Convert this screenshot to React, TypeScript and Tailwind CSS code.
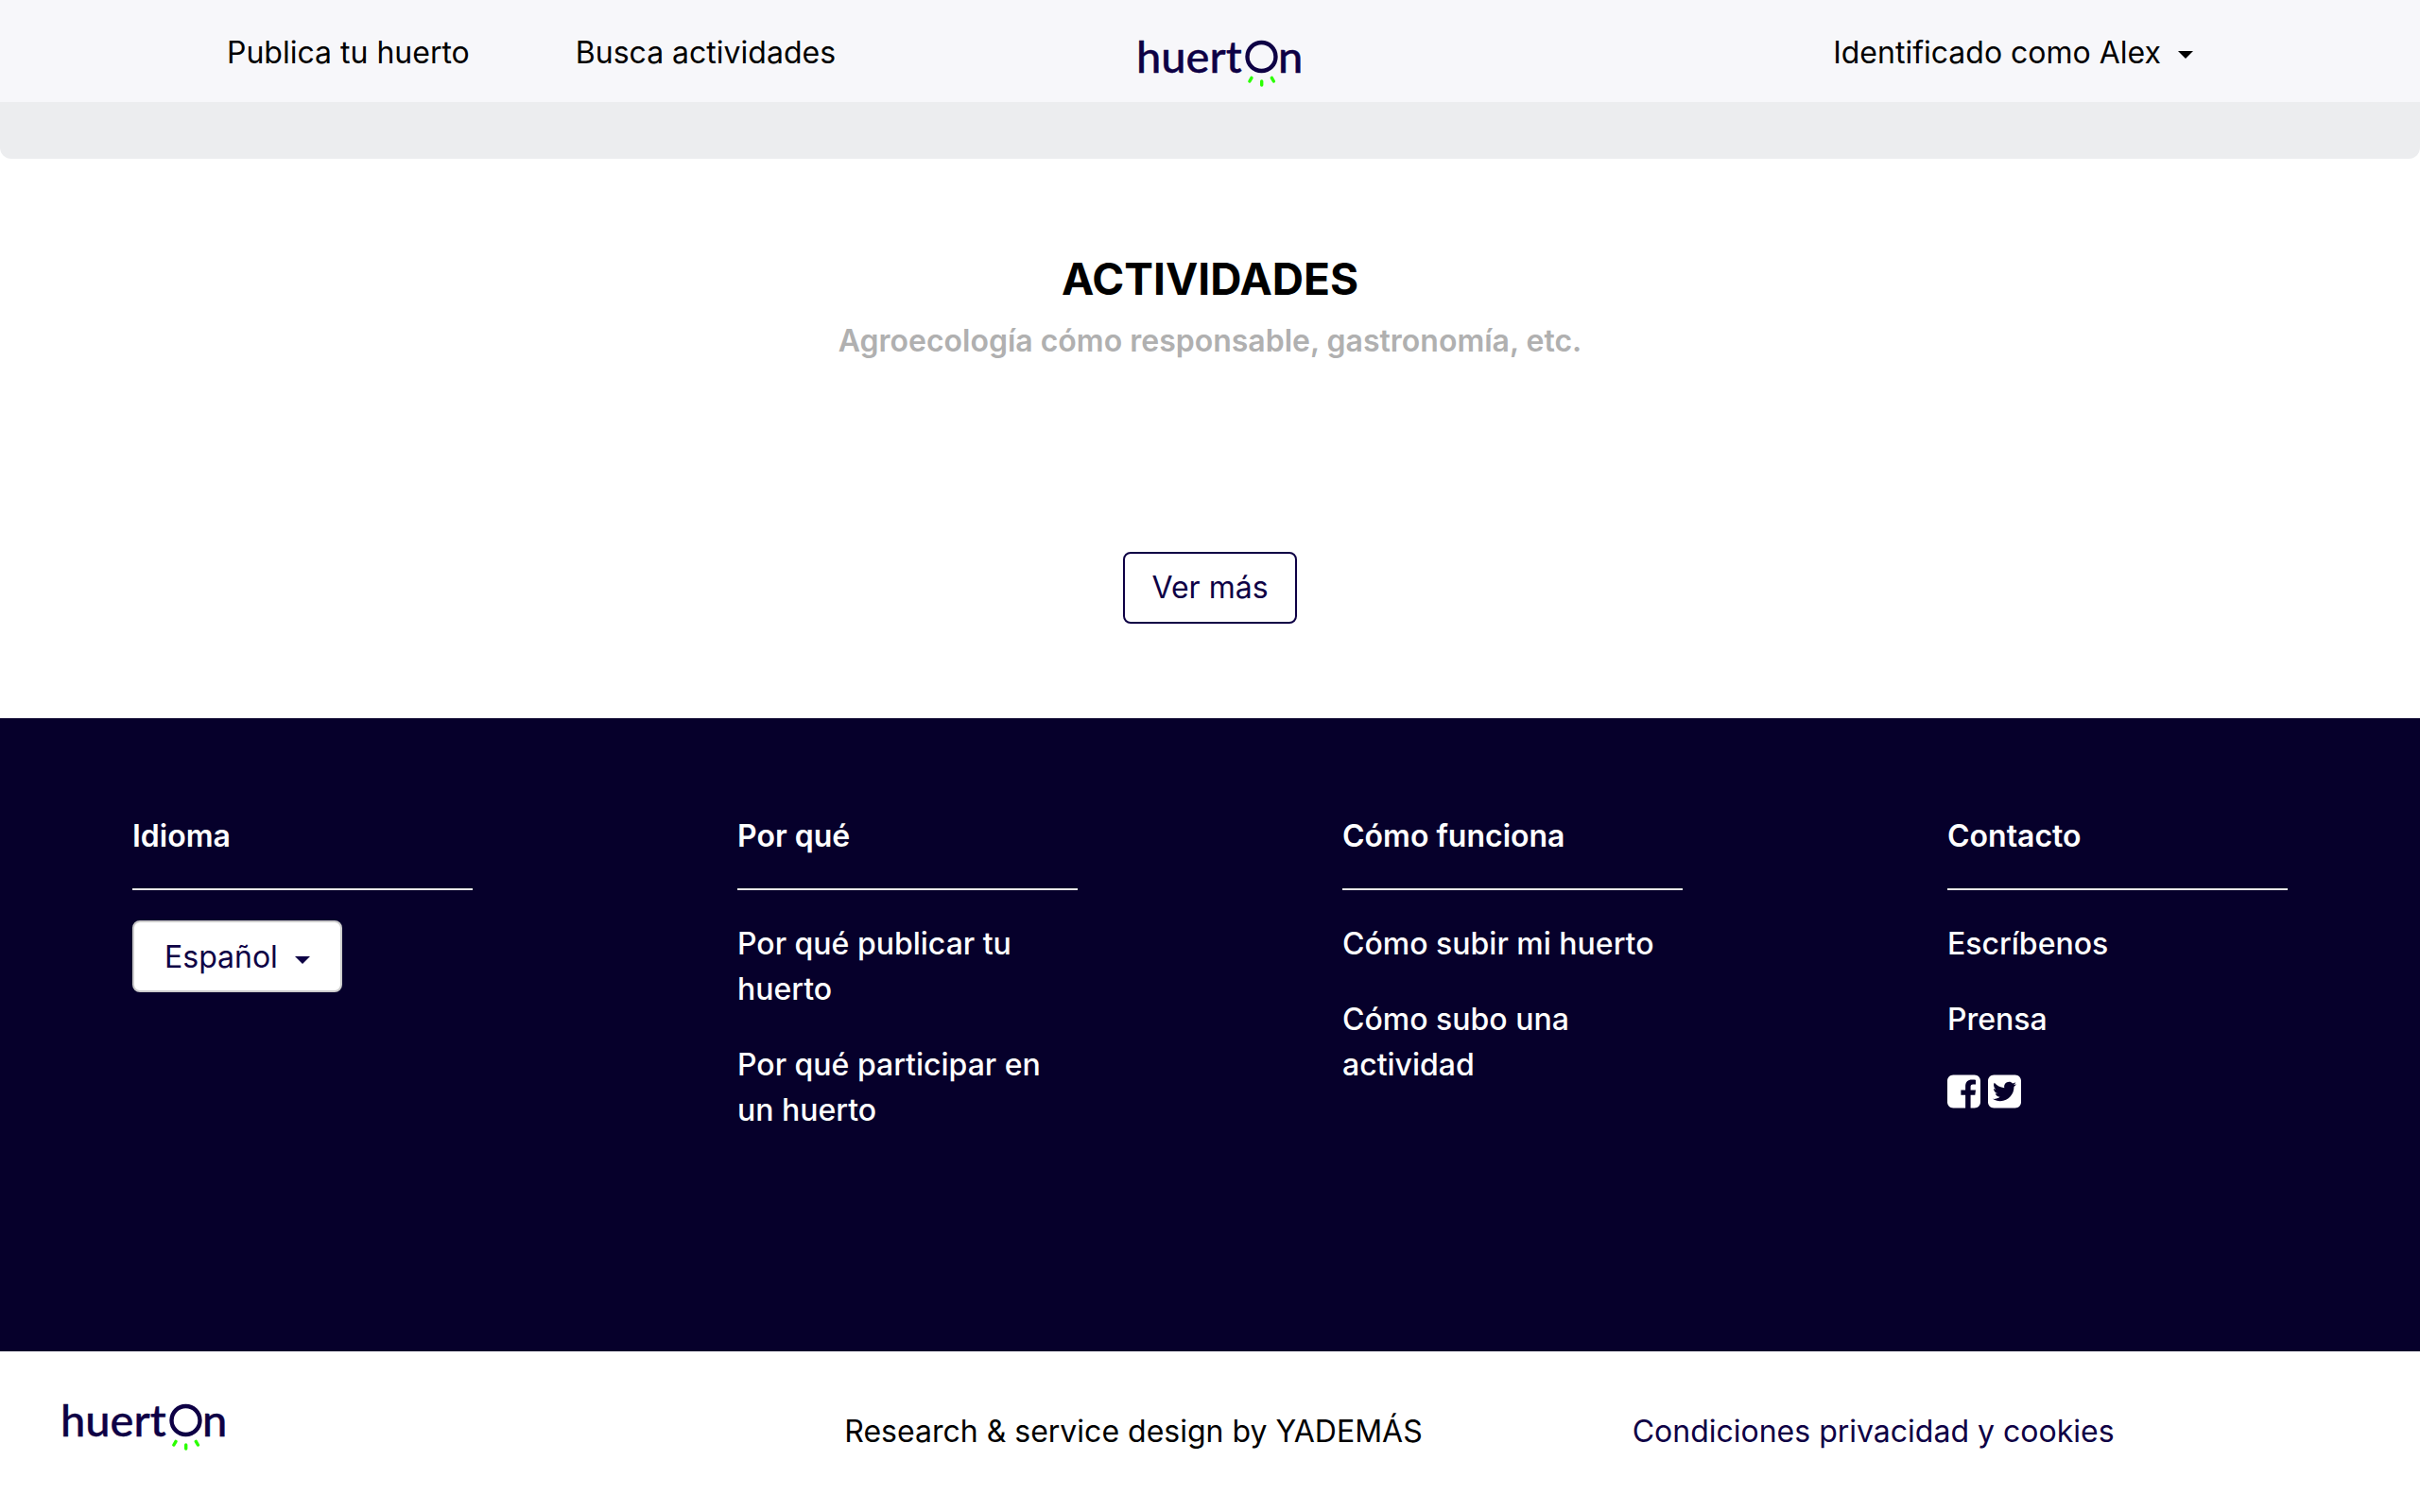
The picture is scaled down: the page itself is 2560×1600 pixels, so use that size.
import React from "react";

function Logo() {
  return (
    <svg viewBox="0 -10 180 72" className="h-18 w-45 shrink-0" role="img" aria-label="huertOn">
      <g
        fill="#0e0045"
        stroke="#0e0045"
        strokeWidth="0.4"
        fontFamily="Lato, sans-serif"
        fontSize="47"
        fontWeight="500"
      >
        <text x="0" y="39">huert</text>
        <text x="150" y="39">n</text>
      </g>
      <circle cx="132.5" cy="22" r="15" fill="none" stroke="#0e0045" strokeWidth="4.4" />
      <g stroke="#2bff00" strokeWidth="3.4" strokeLinecap="round">
        <path d="M122 44.4 L119.9 48" />
        <path d="M132.7 48 V52" />
        <path d="M143.3 44.4 L145.4 48" />
      </g>
    </svg>
  );
}

function Caret({ className = "" }: { className?: string }) {
  return (
    <svg viewBox="0 0 16 8" className={`h-2 w-4 fill-current ${className}`} aria-hidden="true">
      <path d="M0 0H16L8 8Z" />
    </svg>
  );
}

function FacebookSquare() {
  return (
    <svg viewBox="0 0 448 512" className="h-10 w-[35px] fill-current" aria-hidden="true">
      <path d="M448 112v288c0 44.2-35.8 80-80 80h-53.3V302.8h60.6l8.7-67.6h-69.3V192c0-19.6 5.4-32.9 33.5-32.9H384V98.7c-6.2-.8-27.4-2.7-52.2-2.7-51.6 0-87 31.5-87 89.4v49.9H184v67.6h60.9V480H80c-44.2 0-80-35.8-80-80V112c0-44.2 35.8-80 80-80h288c44.2 0 80 35.8 80 80z" />
    </svg>
  );
}

function TwitterSquare() {
  return (
    <svg viewBox="0 0 448 512" className="h-10 w-[35px] fill-current" aria-hidden="true">
      <path d="M368 32H80C35.8 32 0 67.8 0 112v288c0 44.2 35.8 80 80 80h288c44.2 0 80-35.8 80-80V112c0-44.2-35.8-80-80-80zm-16.9 158.8c.2 2.8.2 5.7.2 8.5 0 86.7-66 186.6-186.6 186.6-37.2 0-71.7-10.8-100.7-29.4 5.3.6 10.4.8 15.8.8 30.7 0 58.9-10.4 81.4-28-28.8-.6-53-19.5-61.3-45.5 10.1 1.5 19.2 1.5 29.6-1.2-30-6.1-52.5-32.5-52.5-64.4v-.8c8.7 4.9 18.9 7.9 29.6 8.3a65.447 65.447 0 0 1-29.2-54.6c0-12.2 3.2-23.4 8.9-33.1 32.3 39.8 80.8 65.8 135.2 68.6-9.3-44.5 24-80.6 64-80.6 18.9 0 35.9 7.9 47.9 20.7 14.8-2.8 29-8.3 41.6-15.8-4.9 15.2-15.2 28-28.8 36.1 13.2-1.4 26-5.1 37.8-10.2-8.9 13.1-20.1 24.7-32.9 34z" />
    </svg>
  );
}

function FooterColumn({ title, children }: { title: string; children: React.ReactNode }) {
  return (
    <section className="px-[140px]">
      <div className="w-[360px]">
        <h2 className="border-b-2 border-[#e6e6e6] pb-[31px] font-semibold">{title}</h2>
        {children}
      </div>
    </section>
  );
}

function FooterLinks({ links, children }: { links: string[]; children?: React.ReactNode }) {
  return (
    <ul className="mt-[33px] flex flex-col gap-8 font-medium">
      {links.map((link) => (
        <li key={link}>
          <a href="#">{link}</a>
        </li>
      ))}
      {children}
    </ul>
  );
}

export default function App() {
  return (
    <div className="bg-white font-['Inter',sans-serif] text-[32px] leading-[48px] text-black">
      <header className="grid h-27 grid-cols-[1fr_auto_1fr] items-center bg-[#f7f7fa] px-60">
        <nav className="flex gap-28 pt-1">
          <a href="#">Publica tu huerto</a>
          <a href="#">Busca actividades</a>
        </nav>
        <a href="#" className="pt-5 pl-6">
          <Logo />
        </a>
        <button type="button" className="flex items-center gap-[18px] justify-self-end pt-1">
          Identificado como Alex
          <Caret className="mt-1" />
        </button>
      </header>
      <div className="h-15 rounded-b-xl bg-[#ecedef]" />

      <main className="flex flex-col items-center pt-[95px] pb-25 text-center">
        <h1 className="text-[46px] leading-[64px] font-bold">ACTIVIDADES</h1>
        <p className="mt-[10px] font-semibold text-[#b0b0b0]">
          Agroecología cómo responsable, gastronomía, etc.
        </p>
        <button
          type="button"
          className="mt-[199px] rounded-lg border-2 border-[#0e0045] px-7 py-3 text-[#0e0045]"
        >
          Ver más
        </button>
      </main>

      <footer>
        <div className="grid grid-cols-4 bg-[#06002b] pt-[101px] pb-[231px] text-white">
          <FooterColumn title="Idioma">
            <div className="relative mt-8 inline-block text-[#0e0045]">
              <select
                aria-label="Idioma"
                className="h-19 appearance-none rounded-lg border-2 border-[#cccccc] bg-white pt-0.5 pr-[66px] pl-8"
              >
                <option>Español</option>
              </select>
              <Caret className="pointer-events-none absolute top-[38px] right-[34px]" />
            </div>
          </FooterColumn>
          <FooterColumn title="Por qué">
            <FooterLinks links={["Por qué publicar tu huerto", "Por qué participar en un huerto"]} />
          </FooterColumn>
          <FooterColumn title="Cómo funciona">
            <FooterLinks links={["Cómo subir mi huerto", "Cómo subo una actividad"]} />
          </FooterColumn>
          <FooterColumn title="Contacto">
            <FooterLinks links={["Escríbenos", "Prensa"]}>
              <li className="flex gap-2">
                <a href="#" aria-label="Facebook">
                  <FacebookSquare />
                </a>
                <a href="#" aria-label="Twitter">
                  <TwitterSquare />
                </a>
              </li>
            </FooterLinks>
          </FooterColumn>
        </div>
        <div className="grid h-[170px] grid-cols-3 items-center">
          <a href="#" className="justify-self-start pb-4 pl-16">
            <Logo />
          </a>
          <p className="pl-10">Research &amp; service design by YADEMÁS</p>
          <a href="#" className="pl-5 text-[#0e0045]">Condiciones privacidad y cookies</a>
        </div>
      </footer>
    </div>
  );
}
